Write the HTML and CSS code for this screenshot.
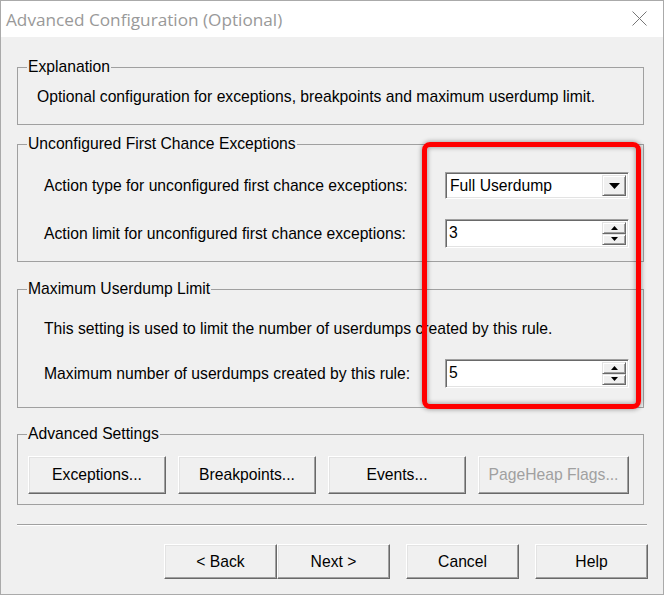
FILE: index.html
```html
<!DOCTYPE html>
<html>
<head>
<meta charset="utf-8">
<link rel="stylesheet" href="styles.css">
</head>
<body>
<div class="window">
  <div class="titlebar">
    <span class="title">Advanced Configuration (Optional)</span>
    <svg class="close" viewBox="0 0 15 15"><path d="M0.5 0.5 L14.5 14.5 M14.5 0.5 L0.5 14.5" stroke="#777" stroke-width="1" fill="none"/></svg>
  </div>
  <div class="content">
    <fieldset class="group g1">
      <legend>Explanation</legend>
      <div class="gbody">
        <p class="text t1">Optional configuration for exceptions, breakpoints and maximum userdump limit.</p>
      </div>
    </fieldset>

    <fieldset class="group g2">
      <legend>Unconfigured First Chance Exceptions</legend>
      <div class="gbody">
        <div class="row">
          <span class="label">Action type for unconfigured first chance exceptions:</span>
          <div class="combo">
            <span class="value">Full Userdump</span>
            <span class="ddbtn"><svg width="11" height="6" viewBox="0 0 11 6"><polygon points="0,0 11,0 5.5,6" fill="#000"/></svg></span>
          </div>
        </div>
        <div class="row row2">
          <span class="label">Action limit for unconfigured first chance exceptions:</span>
          <div class="spin">
            <span class="value">3</span>
            <span class="spinbtns">
              <span class="sb"><svg width="7" height="4" viewBox="0 0 7 4"><polygon points="3.5,0 7,4 0,4" fill="#000"/></svg></span>
              <span class="sb"><svg width="7" height="4" viewBox="0 0 7 4"><polygon points="0,0 7,0 3.5,4" fill="#000"/></svg></span>
            </span>
          </div>
        </div>
      </div>
    </fieldset>

    <fieldset class="group g3">
      <legend>Maximum Userdump Limit</legend>
      <div class="gbody">
        <p class="text">This setting is used to limit the number of userdumps created by this rule.</p>
        <div class="row row3">
          <span class="label">Maximum number of userdumps created by this rule:</span>
          <div class="spin">
            <span class="value">5</span>
            <span class="spinbtns">
              <span class="sb"><svg width="7" height="4" viewBox="0 0 7 4"><polygon points="3.5,0 7,4 0,4" fill="#000"/></svg></span>
              <span class="sb"><svg width="7" height="4" viewBox="0 0 7 4"><polygon points="0,0 7,0 3.5,4" fill="#000"/></svg></span>
            </span>
          </div>
        </div>
      </div>
    </fieldset>

    <fieldset class="group g4">
      <legend>Advanced Settings</legend>
      <div class="gbody btnrow">
        <button class="btn wide">Exceptions...</button>
        <button class="btn wide">Breakpoints...</button>
        <button class="btn wide">Events...</button>
        <button class="btn wider disabled">PageHeap Flags...</button>
      </div>
    </fieldset>

    <div class="separator"></div>

    <div class="footer">
      <button class="btn nav">&lt; Back</button>
      <button class="btn nav">Next &gt;</button>
      <button class="btn nav gap">Cancel</button>
      <button class="btn nav gap">Help</button>
    </div>
  </div>
  <div class="highlight"></div>
</div>
</body>
</html>
```

FILE: styles.css
```css
* { box-sizing: border-box; }
html, body { margin: 0; padding: 0; background: #fff; }
body {
  font-family: "Liberation Sans", Arial, sans-serif;
  font-size: 15.7px;
  color: #000;
}
.window {
  position: relative;
  width: 664px;
  height: 595px;
  border: 1px solid #aaa;
  background: #f0f0f0;
  display: flex;
  flex-direction: column;
}
.titlebar {
  height: 36px;
  flex: none;
  background: #fff;
  display: flex;
  align-items: center;
  justify-content: space-between;
  padding: 2px 16px 0 5px;
}
.title {
  font-family: "Open Sans", "Noto Sans", sans-serif;
  font-size: 17.2px;
  color: #999;
  line-height: 20px;
}
.close { width: 15px; height: 15px; display: block; margin-top: -3px; }

.content { padding: 21px 0 0 16px; }

.group {
  margin: 0;
  padding: 0;
  width: 627px;
  min-width: 0;
  border: 1px solid #a0a0a0;
}
.group legend {
  margin-left: 9px;
  padding: 0 1px;
  line-height: 18px;
}
.text { margin: 0; line-height: 18px; }

.g1 .gbody { padding: 12px 0 18px 19px; }

.g2 { margin-top: 10px; }
.g2 .gbody { padding: 19px 14px 13px 26px; }

.g3 { margin-top: 18px; }
.g3 .gbody { padding: 22px 14px 19px 26px; }

.g4 { margin-top: 17px; }
.g4 .gbody { padding: 13px 0 10px 10px; }

.row {
  display: flex;
  align-items: center;
  justify-content: space-between;
  line-height: 18px;
}
.row2 { margin-top: 20px; }
.row3 { margin-top: 21px; }

.combo, .spin {
  width: 184px;
  background: #fff;
  display: flex;
  align-items: stretch;
  border: 1px solid;
  border-color: #a0a0a0 #fff #fff #a0a0a0;
  box-shadow: inset 1px 1px #696969, inset -1px -1px #e3e3e3;
  padding: 2px;
}
.combo { height: 27px; }
.spin { height: 29px; }
.value {
  flex: 1;
  padding-left: 2px;
  display: flex;
  align-items: center;
}
.spin .value { align-items: flex-start; padding-top: 2px; padding-left: 1px; }

.ddbtn, .sb {
  background: #f0f0f0;
  border: 1px solid;
  border-color: #e3e3e3 #696969 #696969 #e3e3e3;
  box-shadow: inset 1px 1px #fff, inset -1px -1px #a0a0a0;
  display: flex;
  align-items: center;
  justify-content: center;
}
.ddbtn { width: 24px; }
.ddbtn svg { display: block; }
.spinbtns {
  width: 24px;
  display: flex;
  flex-direction: column;
}
.sb { flex: 1; }
.sb svg { display: block; }

.btn {
  font-family: "Liberation Sans", Arial, sans-serif;
  font-size: 15.7px;
  color: #000;
  background: #f0f0f0;
  border: 1px solid;
  border-color: #fff #696969 #696969 #fff;
  box-shadow: inset -1px -1px #a0a0a0, inset 1px 1px #e3e3e3;
  padding: 0;
  margin: 0;
}
.btnrow { display: flex; gap: 12px; }
.btnrow .btn { height: 38px; }
.wide { width: 138px; }
.wider { width: 151px; }
.disabled { color: #a0a0a0; }

.separator {
  width: 630px;
  margin-top: 19px;
  height: 2px;
  border-top: 1px solid #a0a0a0;
  border-bottom: 1px solid #fff;
}

.footer {
  display: flex;
  justify-content: flex-end;
  padding-right: 15px;
  margin-top: 18px;
}
.nav { width: 113px; height: 35px; }
.nav.gap { margin-left: 16px; }

.highlight {
  position: absolute;
  left: 421px;
  top: 141px;
  width: 219px;
  height: 267px;
  border: 5px solid #ff0000;
  border-radius: 8px;
  box-shadow: 0 0 4px 1px rgba(0,0,0,0.3), inset 0 0 4px 1px rgba(0,0,0,0.3);
  pointer-events: none;
}
```
